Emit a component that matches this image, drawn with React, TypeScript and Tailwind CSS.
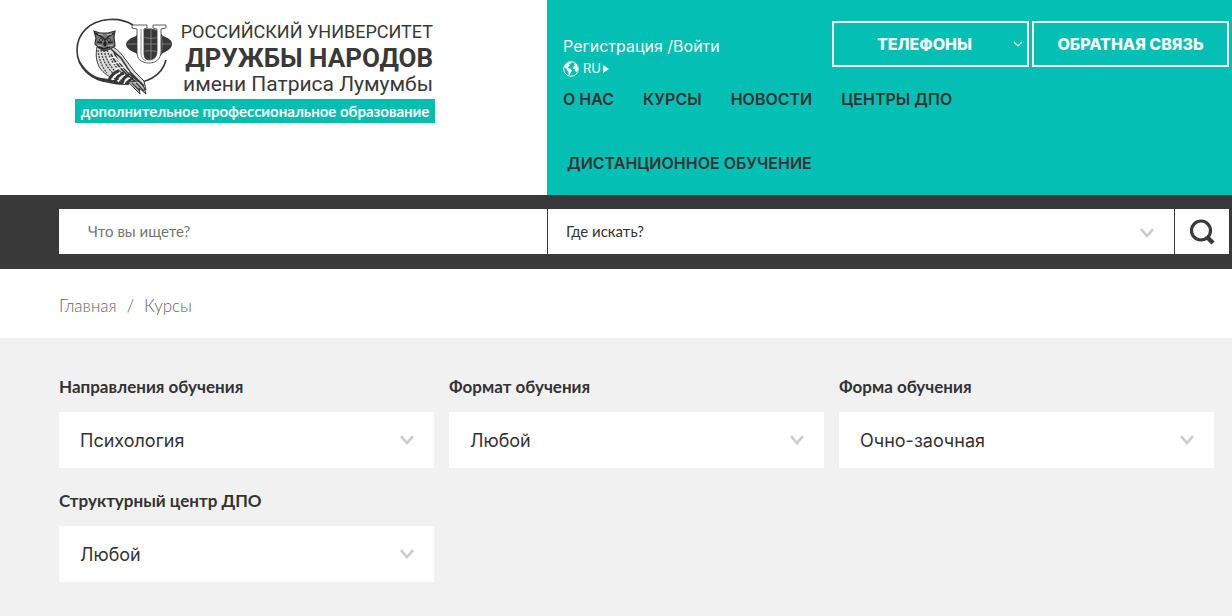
import type { ReactNode } from "react"

const navLinks = ["О НАС", "КУРСЫ", "НОВОСТИ", "ЦЕНТРЫ ДПО"]

const filters = [
  { id: "direction", label: "Направления обучения", value: "Психология" },
  { id: "format", label: "Формат обучения", value: "Любой" },
  { id: "form", label: "Форма обучения", value: "Очно-заочная" },
  { id: "center", label: "Структурный центр ДПО", value: "Любой" },
]

function Chevron({ className }: { className: string }) {
  return (
    <svg viewBox="0 0 14 10" fill="none" stroke="currentColor" strokeWidth="2.6" className={className} aria-hidden="true">
      <path d="M1 1.2 7 8 13 1.2" />
    </svg>
  )
}

function Emblem() {
  return (
    <svg viewBox="0 0 100 80" className="h-20 w-[100px] shrink-0" fill="none" aria-hidden="true">
      {/* Ring */}
      <path d="M58 9C50 4 41 3 34 3.500 14 5 2 18 2 34c0 18 15 31 33 32" stroke="#383838" strokeWidth="1.6" />
      <path d="M4 45c7 12 17 19 29 19l16 3c22 2 38-7 42-23" stroke="#383838" strokeWidth="1.6" />
      <path d="m20 61 13 2 20 4-3 2c-12 0-21-3-30-8Z" fill="#383838" />
      {/* Globe */}
      <path d="M51 28c1-4 5-6 10-8 7-10 20-10 27 0 5 2 9 4 9 8s-4 7-9 9c-7 9-20 9-27 0-6-2-10-5-10-9Z" fill="#383838" />
      <path d="M76 12v32M64 20c8 3 17 3 24 0M52 28h44M62 37c8-3 17-3 25 0M82 13c7 9 7 22 0 31" stroke="#999" strokeWidth=".7" />
      {/* Fluted column with a thin right arm */}
      <path d="M57 9h15v3l-3 1v24c0 5 2 7 5 7 5 0 8-3 8-9V13l-4-1V9h13v3l-5 1v22c0 8-5 12-12 12-8 0-12-4-12-11V13l-5-1Z" fill="#fff" stroke="#383838" strokeWidth=".8" />
      <path d="M66 13v24c0 4 2 7 5 8" stroke="#777" strokeWidth=".8" />
      {/* Owl body and wing */}
      <path d="M22 31c-3 15 3 26 16 31l14 4 14 5 5 3-2-9-9-9-10-13c-3-5-7-9-12-12Z" fill="#ddd" stroke="#383838" strokeWidth="1" />
      <path d="M23 34c1 9 4 17 9 23M26 34c1 9 6 18 13 24M29 34c2 10 7 18 14 24M32 34c3 9 9 18 16 24" stroke="#444" strokeWidth="1.3" strokeDasharray="2 1" />
      <path d="m36 33 10 9 9 14 14 14M39 36c3 9 8 14 15 22l12 9M36 38c4 10 11 15 17 22l8 6" stroke="#383838" strokeWidth="1.6" />
      <path d="m33 43 7-2 5 5M37 48l8-2 6 6M41 53l8-2 5 5" stroke="#fff" strokeWidth="1.2" />
      <path d="M34 64c3-6 6-8 10-9M40 66c2-6 5-8 9-9M46 68c2-6 4-8 8-9M52 69c1-4 3-6 6-7" stroke="#383838" strokeWidth="3" />
      <path d="M37 64c2-4 4-6 8-7M43 66c2-4 4-6 7-7M49 68c1-4 3-5 6-6" stroke="#fff" strokeWidth="1.3" />
      {/* Owl head */}
      <path d="m19 15 6 2h8l7-2-1 6 1 9-5 3-6 2-5-3-4-4 1-6Z" fill="#777" stroke="#333" strokeWidth="1.2" />
      <path d="m20 17 7 4 3 3 3-3 6-4M22 26l5 1m6 0 5-1M24 31l5 2 6-2" stroke="#222" strokeWidth="1.5" />
      <path d="m23 18 5 1m4 0 5-1M22 29l5 1m6 0 5-1" stroke="#ccc" strokeWidth=".8" />
      <circle cx="26" cy="24" r="1.4" fill="#bbb" stroke="#222" strokeWidth="1" />
      <circle cx="34" cy="24" r="1.4" fill="#bbb" stroke="#222" strokeWidth="1" />
      <path d="m30 24-2 4 2 3 2-3Z" fill="#222" />
      {/* Tail */}
      <path d="m53 66 12 12-1-6 7 6-2-7-6-6Z" fill="#bbb" stroke="#383838" strokeWidth="1" />
      <path d="m57 67 8 8m-4-8 8 8" stroke="#383838" strokeWidth="1.2" />
    </svg>
  )
}

function Logo() {
  return (
    <a href="#" className="mt-4 flex w-[360px] flex-col text-[#393939]">
      <span className="flex h-[83px]">
        <Emblem />
        <span className="flex flex-1 flex-col items-end pt-1 pr-[2px] font-['Roboto',sans-serif] whitespace-nowrap">
          <span className="text-[18px] leading-6">РОССИЙСКИЙ УНИВЕРСИТЕТ</span>
          <span className="text-[26px] leading-7 font-bold">ДРУЖБЫ НАРОДОВ</span>
          <span className="text-[21px] leading-6">имени Патриса Лумумбы</span>
        </span>
      </span>
      <span className="bg-[#04bfb1] text-center font-['Lato',sans-serif] text-[15px] leading-6 font-bold whitespace-nowrap text-white">
        дополнительное профессиональное образование
      </span>
    </a>
  )
}

function Globe() {
  return (
    <svg viewBox="0 0 16 16" className="size-4" aria-hidden="true">
      <circle cx="8" cy="8" r="7.300" fill="none" stroke="white" strokeWidth=".9" />
      <path d="M2 4 5 1.500l3.500-.5L8 2.500 6 3.500l1 1-2 1.500.5 1L7 7.500l2 2L7.500 12l-1 2.500-1-1V11L4 9 3.500 7.500 1 6.500ZM10.500 2.500l3 1L15 8l-1 3-1.500-.5-.5-2-2-1 .5-2L12 5Z" fill="white" />
    </svg>
  )
}

function HeaderButton({ children }: { children: ReactNode }) {
  return (
    <button className="relative h-[46px] flex-1 border-2 border-white text-base font-extrabold whitespace-nowrap text-white">
      {children}
    </button>
  )
}

export default function App() {
  return (
    <div className="min-h-screen bg-[#f1f1f1] font-['Inter',sans-serif] text-[#333]">
      {/* Header */}
      <header className="flex h-[195px] bg-white">
        <div className="flex w-[547px] shrink-0 pl-[75px]">
          <Logo />
        </div>
        <div className="flex-1 bg-[#04bfb3] pr-[3px] pl-4">
          <div className="flex h-[89px] justify-between">
            <div className="pt-9 text-white">
              <div className="text-base leading-5">
                <a href="#">Регистрация</a> /<a href="#">Войти</a>
              </div>
              <button className="flex h-[26px] items-center text-[13px]">
                <Globe />
                <span className="ml-1">RU</span>
                <svg viewBox="0 0 6 8" className="ml-[2px] h-2 w-[6px]" fill="currentColor" aria-hidden="true">
                  <path d="m0 0 6 4-6 4Z" />
                </svg>
              </button>
            </div>
            <div className="flex w-[397px] gap-[3px] pt-[21px]">
              <HeaderButton>
                <span className="pr-3">ТЕЛЕФОНЫ</span>
                <svg viewBox="0 0 10 6" className="absolute top-[18px] right-1 h-[6px] w-[10px]" fill="none" stroke="currentColor" strokeWidth="1.2" aria-hidden="true">
                  <path d="m1 1 4 4 4-4" />
                </svg>
              </HeaderButton>
              <HeaderButton>ОБРАТНАЯ СВЯЗЬ</HeaderButton>
            </div>
          </div>
          <nav className="text-base leading-5 font-semibold">
            <div className="flex gap-[29px]">
              {navLinks.map((link) => (
                <a key={link} href="#">
                  {link}
                </a>
              ))}
            </div>
            <a href="#" className="mt-11 ml-1 block">
              ДИСТАНЦИОННОЕ ОБУЧЕНИЕ
            </a>
          </nav>
        </div>
      </header>

      {/* Search */}
      <form className="flex h-[74px] gap-px bg-[#393939] pt-[14px] pr-[3px] pb-[15px] pl-[59px] font-['Lato',sans-serif]">
        <input
          type="text"
          aria-label="Поиск"
          placeholder="Что вы ищете?"
          className="w-[488px] bg-white pl-[29px] text-[15px] placeholder:text-[#757575]"
        />
        <div className="relative flex-1">
          <select aria-label="Раздел" className="h-full w-full appearance-none bg-white pl-[18px] text-[15px] text-[#333]">
            <option>Где искать?</option>
          </select>
          <Chevron className="pointer-events-none absolute top-[19px] right-5 h-[10px] w-[14px] text-[#ccc]" />
        </div>
        <button type="button" aria-label="Найти" className="flex w-[54px] items-center justify-center bg-white">
          <svg viewBox="0 0 26 26" className="size-[26px]" fill="none" stroke="#393939" aria-hidden="true">
            <circle cx="12" cy="11.500" r="9.500" strokeWidth="3.2" />
            <path d="m18.500 18.500 5.500 5.500" strokeWidth="4.500" />
          </svg>
        </button>
      </form>

      {/* Breadcrumbs */}
      <nav className="flex h-[69px] items-center gap-[10px] bg-white pt-1 pl-[59px] font-['Lato',sans-serif] text-[17px] font-light text-[#666]">
        <a href="#">Главная</a>
        <span>/</span>
        <a href="#">Курсы</a>
      </nav>

      {/* Filters */}
      <main className="grid grid-cols-3 gap-x-[15px] gap-y-[19px] pt-[35px] pr-[18px] pb-[34px] pl-[59px]">
        {filters.map((filter) => (
          <div key={filter.id}>
            <label htmlFor={filter.id} className="block pb-[11px] font-['Lato',sans-serif] text-[17px] leading-7 font-bold">
              {filter.label}
            </label>
            <div className="relative h-14">
              <select id={filter.id} className="h-full w-full appearance-none bg-white pt-[2px] pl-[21px] text-lg">
                <option>{filter.value}</option>
              </select>
              <Chevron className="pointer-events-none absolute top-[23px] right-5 h-[10px] w-[14px] text-[#ccc]" />
            </div>
          </div>
        ))}
      </main>
    </div>
  )
}
